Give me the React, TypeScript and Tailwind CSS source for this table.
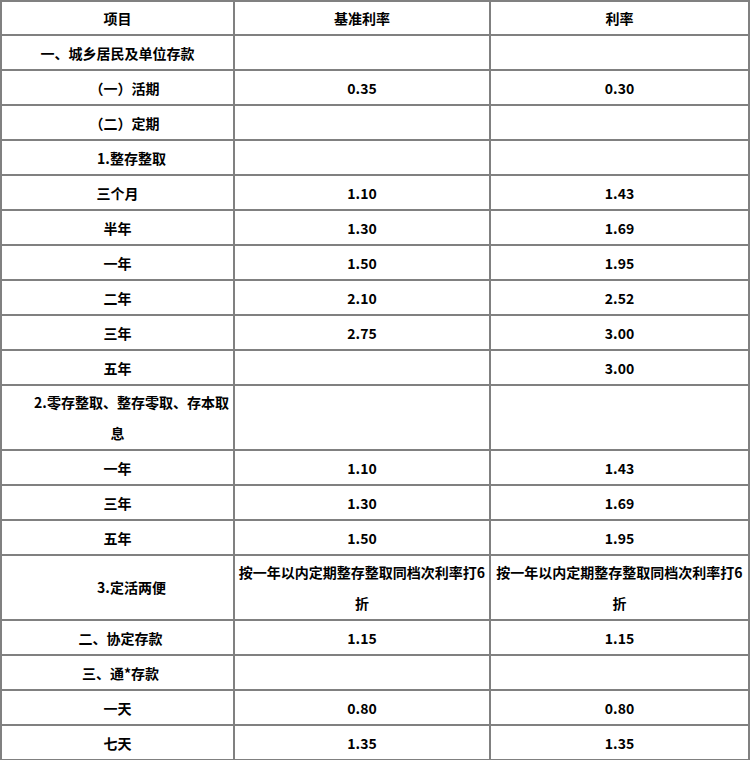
import React from "react";

type Row = {
  a: React.ReactNode;
  b?: React.ReactNode;
  c?: React.ReactNode;
  indent?: string;
  two?: boolean;
};

const rows: Row[] = [
  { a: "一、城乡居民及单位存款" },
  { a: "（一）活期", b: "0.35", c: "0.30", indent: "indent-[14px]" },
  { a: "（二）定期", indent: "indent-[14px]" },
  { a: "1.整存整取", indent: "indent-[28px]" },
  { a: "三个月", b: "1.10", c: "1.43" },
  { a: "半年", b: "1.30", c: "1.69" },
  { a: "一年", b: "1.50", c: "1.95" },
  { a: "二年", b: "2.10", c: "2.52" },
  { a: "三年", b: "2.75", c: "3.00" },
  { a: "五年", c: "3.00" },
  {
    a: (
      <>
        <span className="inline-block indent-0 pl-[28px]">2.零存整取、整存零取、存本取</span>
        <br />
        息
      </>
    ),
    two: true,
  },
  { a: "一年", b: "1.10", c: "1.43" },
  { a: "三年", b: "1.30", c: "1.69" },
  { a: "五年", b: "1.50", c: "1.95" },
  {
    a: "3.定活两便",
    indent: "indent-[28px]",
    b: (
      <>
        按一年以内定期整存整取同档次利率打6
        <br />
        折
      </>
    ),
    c: (
      <>
        按一年以内定期整存整取同档次利率打6
        <br />
        折
      </>
    ),
    two: true,
  },
  { a: "二、协定存款", b: "1.15", c: "1.15", indent: "indent-[6px]" },
  { a: "三、通*存款", indent: "indent-[6px]" },
  { a: "一天", b: "0.80", c: "0.80" },
  { a: "七天", b: "1.35", c: "1.35" },
];

export default function App() {
  const cell =
    "border border-[#808080] p-0 text-center align-middle whitespace-nowrap";
  return (
    <div
      className="w-[750px] bg-white text-black font-bold text-[14px]"
      style={{ fontFamily: '"Noto Sans CJK SC", "Noto Sans", sans-serif' }}
    >
      <table className="w-[750px] table-fixed border-separate border-spacing-0 border border-[#808080]">
        <colgroup>
          <col className="w-[233px]" />
          <col className="w-[256px]" />
          <col className="w-[259px]" />
        </colgroup>
        <thead>
          <tr>
            <td className={`${cell} h-[34px] leading-[30px]`}>项目</td>
            <td className={`${cell} h-[34px] leading-[30px]`}>基准利率</td>
            <td className={`${cell} h-[34px] leading-[30px]`}>利率</td>
          </tr>
        </thead>
        <tbody>
          {rows.map((r, i) => {
            const h = r.two ? "h-[65px] leading-[31px]" : "h-[35px] leading-[30px]";
            return (
              <tr key={i}>
                <td className={`${cell} ${h} ${r.indent ?? ""}`}>{r.a}</td>
                <td className={`${cell} ${h}`}>{r.b ?? ""}</td>
                <td className={`${cell} ${h}`}>{r.c ?? ""}</td>
              </tr>
            );
          })}
        </tbody>
      </table>
    </div>
  );
}
